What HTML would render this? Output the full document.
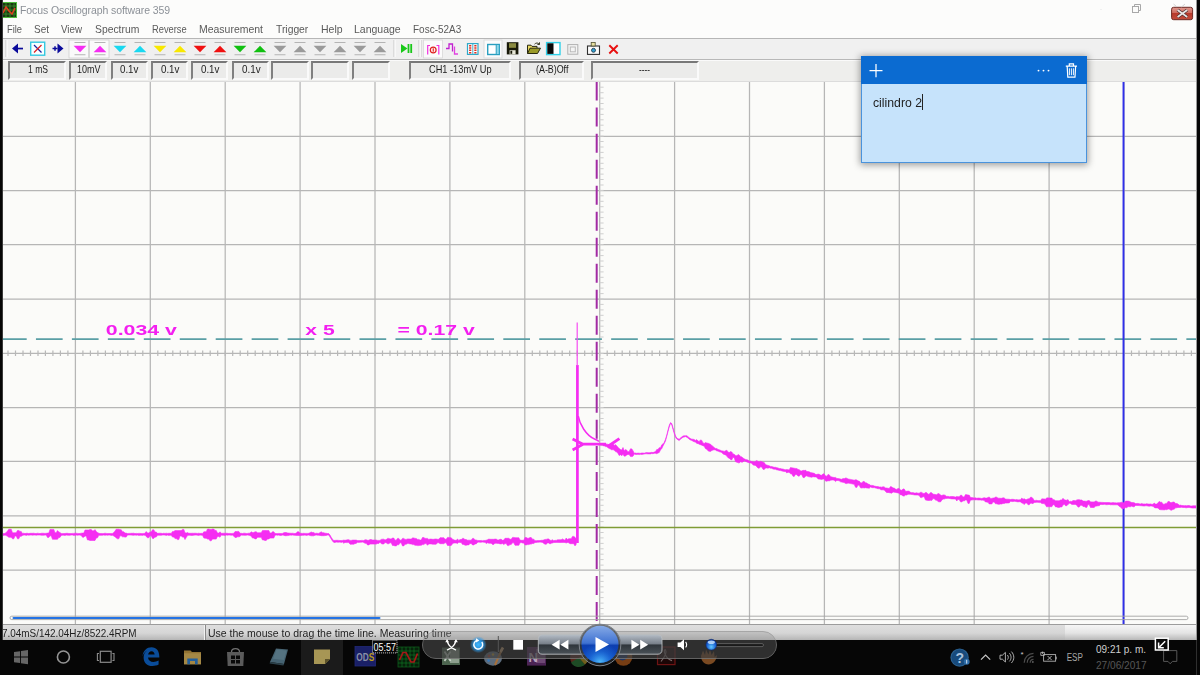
<!DOCTYPE html>
<html><head><meta charset="utf-8"><title>Focus Oscillograph software 359</title>
<style>
html,body{margin:0;padding:0;background:#fbfbf9;}
body{width:1200px;height:675px;overflow:hidden;position:relative;font-family:"Liberation Sans",sans-serif;}
#root{position:absolute;left:0;top:0;width:1200px;height:675px;overflow:hidden;background:#fbfbf9;}
.abs{position:absolute;}
.fit{display:inline-block;transform-origin:0 50%;white-space:nowrap;}
#titlebar{left:0;top:0;width:1200px;height:20px;background:#fcfcfb;}
#title{left:20px;top:3.5px;font-size:11.5px;color:#8b9097;white-space:nowrap;letter-spacing:-0.1px;}
#menubar{left:0;top:20px;width:1200px;height:18px;background:#fcfcfb;}
.mi{position:absolute;top:22.5px;font-size:11.5px;color:#5a5a5a;white-space:nowrap;}
#toolbar{left:0;top:38px;width:1200px;height:21px;background:#f0f0f0;border-top:1px solid #b6b6b6;box-sizing:border-box;}
#infobar{left:0;top:59px;width:1200px;height:23px;background:#eeeeec;border-top:1px solid #b8b8b8;box-shadow:inset 0 1px 0 #fafafa, inset 0 -1px 0 #dcdcdc;box-sizing:border-box;}
.ib{position:absolute;top:61px;height:19px;box-sizing:border-box;border-top:2px solid #787878;border-left:2px solid #808080;border-right:2px solid #fafafa;border-bottom:2px solid #fafafa;background:#ebebea;font-size:10.5px;color:#222;text-align:center;line-height:14px;white-space:nowrap;}
#leftedge{left:0;top:0;width:3px;height:640px;background:linear-gradient(90deg,#060606 0,#060606 2px,#3a3a3a 2px,#3a3a3a 3px);}
#rightedge{left:1196px;top:0;width:4px;height:640px;background:linear-gradient(90deg,#9a9a9a 0,#9a9a9a 1px,#060606 1px,#060606 4px);}
#plot{left:0;top:82px;width:1200px;height:543px;filter:blur(0.35px);}
#status{left:0;top:624px;width:1200px;height:16px;background:linear-gradient(#9c9c9c 0,#9c9c9c 1px,#dedede 1px,#d6d6d6 9px,#b6b6b6 16px);}
.st{position:absolute;top:625.5px;font-size:11.5px;line-height:14px;color:#1e1e1e;white-space:nowrap;}
#taskbar{left:0;top:640px;width:1200px;height:35px;background:#060606;}
.it{position:absolute;top:63px;font-size:10.5px;line-height:13px;color:#1c1c1c;white-space:nowrap;}
.mag{font-family:"Liberation Sans",sans-serif;font-weight:bold;fill:#f31ff0;}
</style></head><body><div id="root">
<div id="titlebar" class="abs"></div>
<div id="title" class="abs"><span class="fit" style="transform:scaleX(0.9125)">Focus Oscillograph software 359</span></div>
<div id="menubar" class="abs"></div>
<div class="mi" style="left:6.7px"><span class="fit" style="transform:scaleX(0.8094)">File</span></div>
<div class="mi" style="left:34px"><span class="fit" style="transform:scaleX(0.8688)">Set</span></div>
<div class="mi" style="left:61px"><span class="fit" style="transform:scaleX(0.8496)">View</span></div>
<div class="mi" style="left:95px"><span class="fit" style="transform:scaleX(0.9001)">Spectrum</span></div>
<div class="mi" style="left:152.3px"><span class="fit" style="transform:scaleX(0.8102)">Reverse</span></div>
<div class="mi" style="left:199.3px"><span class="fit" style="transform:scaleX(0.9102)">Measurement</span></div>
<div class="mi" style="left:276px"><span class="fit" style="transform:scaleX(0.8972)">Trigger</span></div>
<div class="mi" style="left:320.7px"><span class="fit" style="transform:scaleX(0.9131)">Help</span></div>
<div class="mi" style="left:354.3px"><span class="fit" style="transform:scaleX(0.9126)">Language</span></div>
<div class="mi" style="left:412.7px"><span class="fit" style="transform:scaleX(0.8686)">Fosc-52A3</span></div>
<div id="toolbar" class="abs"></div>
<div id="infobar" class="abs"></div>
<svg class="abs" style="left:0;top:38px" width="700" height="21" viewBox="0 38 700 21">
<path d="M12,48.5 L18,43.5 V53.5 Z" fill="#0a0a9a"/><rect x="18" y="47.7" width="5" height="1.7" fill="#0a0a9a"/>
<rect x="30.7" y="42.2" width="14" height="13" fill="#f8ffff" stroke="#35c8e0" stroke-width="1.4"/>
<path d="M34,45 L41.5,52.5" stroke="#2020a0" stroke-width="1.3"/><path d="M41.5,45 L34,52.5" stroke="#e02020" stroke-width="1.3"/>
<path d="M63.5,48.5 L57.5,43.5 V53.5 Z" fill="#0a0a9a"/><path d="M52.5,48.5H57.5M55,46.3V50.8" stroke="#0a0a9a" stroke-width="1.5"/>
<rect x="69" y="40" width="19.5" height="18" fill="#fafafa" stroke="#d0d0d0" stroke-width="0.8"/>
<rect x="89.5" y="40" width="19.5" height="18" fill="#fafafa" stroke="#d0d0d0" stroke-width="0.8"/>
<path d="M73.6,45.7 H86.4 L80,52.3 Z" fill="#f52df2"/>
<path d="M74.5,42.5H85.5M74.5,54.8H85.5" stroke="#b4b4b4" stroke-width="1.1"/>
<path d="M93.6,52.3 H106.4 L100,45.7 Z" fill="#f52df2"/>
<path d="M94.5,42.5H105.5M94.5,54.8H105.5" stroke="#b4b4b4" stroke-width="1.1"/>
<path d="M113.6,45.7 H126.4 L120,52.3 Z" fill="#18d8f0"/>
<path d="M114.5,42.5H125.5M114.5,54.8H125.5" stroke="#b4b4b4" stroke-width="1.1"/>
<path d="M133.6,52.3 H146.4 L140,45.7 Z" fill="#18d8f0"/>
<path d="M134.5,42.5H145.5M134.5,54.8H145.5" stroke="#b4b4b4" stroke-width="1.1"/>
<path d="M153.6,45.7 H166.4 L160,52.3 Z" fill="#f8e800"/>
<path d="M154.5,42.5H165.5M154.5,54.8H165.5" stroke="#b4b4b4" stroke-width="1.1"/>
<path d="M173.6,52.3 H186.4 L180,45.7 Z" fill="#f8e800"/>
<path d="M174.5,42.5H185.5M174.5,54.8H185.5" stroke="#b4b4b4" stroke-width="1.1"/>
<path d="M193.6,45.7 H206.4 L200,52.3 Z" fill="#f01010"/>
<path d="M194.5,42.5H205.5M194.5,54.8H205.5" stroke="#b4b4b4" stroke-width="1.1"/>
<path d="M213.6,52.3 H226.4 L220,45.7 Z" fill="#f01010"/>
<path d="M214.5,42.5H225.5M214.5,54.8H225.5" stroke="#b4b4b4" stroke-width="1.1"/>
<path d="M233.6,45.7 H246.4 L240,52.3 Z" fill="#10c010"/>
<path d="M234.5,42.5H245.5M234.5,54.8H245.5" stroke="#b4b4b4" stroke-width="1.1"/>
<path d="M253.6,52.3 H266.4 L260,45.7 Z" fill="#10c010"/>
<path d="M254.5,42.5H265.5M254.5,54.8H265.5" stroke="#b4b4b4" stroke-width="1.1"/>
<path d="M273.6,45.7 H286.4 L280,52.3 Z" fill="#9a9a9a"/>
<path d="M274.5,42.5H285.5M274.5,54.8H285.5" stroke="#b4b4b4" stroke-width="1.1"/>
<path d="M293.6,52.3 H306.4 L300,45.7 Z" fill="#9a9a9a"/>
<path d="M294.5,42.5H305.5M294.5,54.8H305.5" stroke="#b4b4b4" stroke-width="1.1"/>
<path d="M313.6,45.7 H326.4 L320,52.3 Z" fill="#9a9a9a"/>
<path d="M314.5,42.5H325.5M314.5,54.8H325.5" stroke="#b4b4b4" stroke-width="1.1"/>
<path d="M333.6,52.3 H346.4 L340,45.7 Z" fill="#9a9a9a"/>
<path d="M334.5,42.5H345.5M334.5,54.8H345.5" stroke="#b4b4b4" stroke-width="1.1"/>
<path d="M353.6,45.7 H366.4 L360,52.3 Z" fill="#9a9a9a"/>
<path d="M354.5,42.5H365.5M354.5,54.8H365.5" stroke="#b4b4b4" stroke-width="1.1"/>
<path d="M373.6,52.3 H386.4 L380,45.7 Z" fill="#9a9a9a"/>
<path d="M374.5,42.5H385.5M374.5,54.8H385.5" stroke="#b4b4b4" stroke-width="1.1"/>
<path d="M6,40V57" stroke="#c8c8c8" stroke-width="1"/><path d="M7,40V57" stroke="#ffffff" stroke-width="1"/>
<path d="M394,40V57" stroke="#c8c8c8" stroke-width="1"/><path d="M395,40V57" stroke="#ffffff" stroke-width="1"/>
<path d="M419,40V57" stroke="#c8c8c8" stroke-width="1"/><path d="M420,40V57" stroke="#ffffff" stroke-width="1"/>
<path d="M422,40V57" stroke="#c8c8c8" stroke-width="1"/><path d="M423,40V57" stroke="#ffffff" stroke-width="1"/>
<path d="M401,44 L407.5,48.5 L401,53 Z" fill="#18c818"/><rect x="407.6" y="44" width="1.8" height="9" fill="#18c818"/><rect x="410.3" y="44" width="1.8" height="9" fill="#18c818"/>
<rect x="423.5" y="40" width="19" height="18" fill="#fbfbfb" stroke="#d8d8d8" stroke-width="0.8"/>
<path d="M430,45.5H427.7V54.5M436.5,45.5H438.8V54.5" stroke="#f030e0" stroke-width="1.2" fill="none"/>
<circle cx="433.2" cy="50" r="2.9" fill="#fff0f0" stroke="#e02020" stroke-width="1.2"/><rect x="432.7" y="48.3" width="1.1" height="3.4" fill="#e02020"/>
<path d="M446,48.5H449V44H452.5V51.5" stroke="#c020d0" stroke-width="1.3" fill="none"/><path d="M454.5,46.5V54H458" stroke="#e040e0" stroke-width="1.3" fill="none"/>
<rect x="467.5" y="43.6" width="10.5" height="10.8" fill="#fff" stroke="#30a8c8" stroke-width="1.2"/>
<path d="M472.8,43.6V54.4" stroke="#30a8c8" stroke-width="0.9"/><path d="M470.2,45V53.4M475.4,45V53.4" stroke="#e03020" stroke-width="2.2" stroke-dasharray="1.5,0.8"/>
<rect x="484" y="40" width="18" height="18" fill="#fbfbfb" stroke="#d8d8d8" stroke-width="0.8"/>
<rect x="487.7" y="44.5" width="11.6" height="10" fill="#ffffff" stroke="#2a9fc0" stroke-width="1.4"/><rect x="496.2" y="44.5" width="3.1" height="10" fill="#8fd8ea" stroke="#2a9fc0" stroke-width="1"/>
<rect x="506.8" y="42.2" width="11.6" height="12.2" fill="#181808"/><rect x="509" y="43.2" width="7" height="4.6" fill="#8a8a40"/><rect x="509.6" y="50.2" width="6" height="4.2" fill="#e8e8d8"/><rect x="510.4" y="50.8" width="1.8" height="3" fill="#181808"/>
<path d="M527.5,53.5V45.2H531L532,46.4H537V48" fill="#e8d860" stroke="#282810" stroke-width="1"/>
<path d="M527.5,53.5L530,48.2H540.5L537.5,53.5Z" fill="#9a9a28" stroke="#282810" stroke-width="1"/>
<path d="M534.5,44.2C536,42.6 538,42.6 539.3,44.2M539.5,42.3V44.5H537.4" stroke="#282810" stroke-width="0.9" fill="none"/>
<rect x="546.6" y="42.6" width="13.4" height="12" fill="#ffffff" stroke="#30d0e8" stroke-width="1.4"/><rect x="547.3" y="43.3" width="6.2" height="10.6" fill="#080808"/>
<rect x="567.8" y="44.6" width="10" height="9.6" fill="#f4f4f4" stroke="#b0b0b0" stroke-width="1"/><rect x="570.3" y="47" width="5" height="4.8" fill="none" stroke="#b8b8b8" stroke-width="1"/>
<rect x="587.5" y="46" width="12" height="8.4" fill="#fafafa" stroke="#303030" stroke-width="1.1"/><rect x="591.2" y="42.5" width="4" height="3.5" fill="#e8e0a0" stroke="#505030" stroke-width="0.8"/><circle cx="593.5" cy="50.3" r="2" fill="#30a0d0" stroke="#203040" stroke-width="0.8"/>
<path d="M609.3,45.3L617.7,53.5M617.7,45.3L609.3,53.5" stroke="#e81010" stroke-width="1.9" fill="none"/>
</svg>
<svg class="abs" style="left:2px;top:2px" width="15" height="16" viewBox="0 0 15 16"><rect width="15" height="16" fill="#101010"/><rect x="0.5" y="0.5" width="14" height="15" fill="#1a3a10" stroke="#50c040" stroke-width="1"/><path d="M0,4H15M0,8H15M0,12H15M4,0V16M8,0V16M12,0V16" stroke="#40a030" stroke-width="0.7"/><path d="M1,11 L4,5 L7,9 L10,12 L13,6" stroke="#e04020" stroke-width="1.6" fill="none"/></svg>
<svg class="abs" style="left:1100px;top:0" width="100" height="24" viewBox="1100 0 100 24"><defs><linearGradient id="cb" x1="0" y1="0" x2="0" y2="1"><stop offset="0" stop-color="#e09a90"/><stop offset="0.45" stop-color="#cf6a5e"/><stop offset="0.5" stop-color="#b83a2c"/><stop offset="1" stop-color="#c24c3c"/></linearGradient></defs><rect x="1132.5" y="6.5" width="6" height="6" fill="#fcfcfb" stroke="#a8a8a8" stroke-width="1"/><path d="M1134.5,6.5V4.5H1140.5V10.5H1138.5" fill="none" stroke="#a8a8a8" stroke-width="1"/><rect x="1171.6" y="7.3" width="21" height="12.4" rx="2" fill="url(#cb)" stroke="#6e2a24" stroke-width="1"/><path d="M1177.6,10L1187.2,17M1187.2,10L1177.6,17" stroke="#4a2a2a" stroke-width="3.2"/><path d="M1177.6,10L1187.2,17M1187.2,10L1177.6,17" stroke="#e8e4e4" stroke-width="1.8"/><path d="M1173.5,4L1177,7M1185,4L1181.5,7" stroke="#cfcfcf" stroke-width="0.9"/><path d="M1093,9.5H1102" stroke="#f0f0f0" stroke-width="1"/></svg>
<div class="ib" style="left:8px;width:58px"></div>
<div class="ib" style="left:69px;width:38px"></div>
<div class="ib" style="left:111px;width:37px"></div>
<div class="ib" style="left:151px;width:37px"></div>
<div class="ib" style="left:191px;width:37px"></div>
<div class="ib" style="left:232px;width:37px"></div>
<div class="ib" style="left:271px;width:38px"></div>
<div class="ib" style="left:311px;width:38px"></div>
<div class="ib" style="left:352px;width:38px"></div>
<div class="ib" style="left:409px;width:102px"></div>
<div class="ib" style="left:519px;width:65px"></div>
<div class="ib" style="left:591px;width:108px"></div>
<div class="it" style="left:28.3px"><span class="fit" style="transform:scaleX(0.8158)">1 mS</span></div>
<div class="it" style="left:77px"><span class="fit" style="transform:scaleX(0.8565)">10mV</span></div>
<div class="it" style="left:120.3px"><span class="fit" style="transform:scaleX(0.9265)">0.1v</span></div>
<div class="it" style="left:160.8px"><span class="fit" style="transform:scaleX(0.9265)">0.1v</span></div>
<div class="it" style="left:200.8px"><span class="fit" style="transform:scaleX(0.9265)">0.1v</span></div>
<div class="it" style="left:241.7px"><span class="fit" style="transform:scaleX(0.9366)">0.1v</span></div>
<div class="it" style="left:429.4px"><span class="fit" style="transform:scaleX(0.8792)">CH1 -13mV Up</span></div>
<div class="it" style="left:535.6px"><span class="fit" style="transform:scaleX(0.8457)">(A-B)Off</span></div>
<div class="it" style="left:639px"><span class="fit" style="transform:scaleX(0.7857)">----</span></div>

<svg id="plot" class="abs" width="1200" height="543" viewBox="0 82 1200 543">
<rect x="0" y="82" width="1200" height="543" fill="#fbfbf9"/>
<line x1="75.4" y1="82" x2="75.4" y2="625" stroke="#b6b6b6" stroke-width="1.25"/>
<line x1="150.3" y1="82" x2="150.3" y2="625" stroke="#b6b6b6" stroke-width="1.25"/>
<line x1="225.2" y1="82" x2="225.2" y2="625" stroke="#b6b6b6" stroke-width="1.25"/>
<line x1="300.1" y1="82" x2="300.1" y2="625" stroke="#b6b6b6" stroke-width="1.25"/>
<line x1="375.0" y1="82" x2="375.0" y2="625" stroke="#b6b6b6" stroke-width="1.25"/>
<line x1="449.9" y1="82" x2="449.9" y2="625" stroke="#b6b6b6" stroke-width="1.25"/>
<line x1="524.8" y1="82" x2="524.8" y2="625" stroke="#b6b6b6" stroke-width="1.25"/>
<line x1="599.7" y1="82" x2="599.7" y2="625" stroke="#b6b6b6" stroke-width="1.25"/>
<line x1="674.6" y1="82" x2="674.6" y2="625" stroke="#b6b6b6" stroke-width="1.25"/>
<line x1="749.5" y1="82" x2="749.5" y2="625" stroke="#b6b6b6" stroke-width="1.25"/>
<line x1="824.4" y1="82" x2="824.4" y2="625" stroke="#b6b6b6" stroke-width="1.25"/>
<line x1="899.3" y1="82" x2="899.3" y2="625" stroke="#b6b6b6" stroke-width="1.25"/>
<line x1="974.2" y1="82" x2="974.2" y2="625" stroke="#b6b6b6" stroke-width="1.25"/>
<line x1="1049.1" y1="82" x2="1049.1" y2="625" stroke="#b6b6b6" stroke-width="1.25"/>
<line x1="1124.0" y1="82" x2="1124.0" y2="625" stroke="#b6b6b6" stroke-width="1.25"/>
<line x1="2" y1="136.3" x2="1200" y2="136.3" stroke="#b6b6b6" stroke-width="1.25"/>
<line x1="2" y1="190.5" x2="1200" y2="190.5" stroke="#b6b6b6" stroke-width="1.25"/>
<line x1="2" y1="244.5" x2="1200" y2="244.5" stroke="#b6b6b6" stroke-width="1.25"/>
<line x1="2" y1="299.0" x2="1200" y2="299.0" stroke="#b6b6b6" stroke-width="1.25"/>
<line x1="2" y1="353.3" x2="1200" y2="353.3" stroke="#b6b6b6" stroke-width="1.25"/>
<line x1="2" y1="407.5" x2="1200" y2="407.5" stroke="#b6b6b6" stroke-width="1.25"/>
<line x1="2" y1="461.3" x2="1200" y2="461.3" stroke="#b6b6b6" stroke-width="1.25"/>
<line x1="2" y1="515.9" x2="1200" y2="515.9" stroke="#b6b6b6" stroke-width="1.25"/>
<line x1="2" y1="570.2" x2="1200" y2="570.2" stroke="#b6b6b6" stroke-width="1.25"/>
<line x1="2.5" y1="82" x2="2.5" y2="625" stroke="#999" stroke-width="1"/>
<line x1="1197.5" y1="82" x2="1197.5" y2="625" stroke="#c4c4c4" stroke-width="1"/>
<path d="M0.5,350.6V356.1M8.0,350.6V356.1M15.5,350.6V356.1M23.0,350.6V356.1M30.5,350.6V356.1M38.0,350.6V356.1M45.4,350.6V356.1M52.9,350.6V356.1M60.4,350.6V356.1M67.9,350.6V356.1M75.4,350.6V356.1M82.9,350.6V356.1M90.4,350.6V356.1M97.9,350.6V356.1M105.4,350.6V356.1M112.9,350.6V356.1M120.3,350.6V356.1M127.8,350.6V356.1M135.3,350.6V356.1M142.8,350.6V356.1M150.3,350.6V356.1M157.8,350.6V356.1M165.3,350.6V356.1M172.8,350.6V356.1M180.3,350.6V356.1M187.8,350.6V356.1M195.2,350.6V356.1M202.7,350.6V356.1M210.2,350.6V356.1M217.7,350.6V356.1M225.2,350.6V356.1M232.7,350.6V356.1M240.2,350.6V356.1M247.7,350.6V356.1M255.2,350.6V356.1M262.7,350.6V356.1M270.1,350.6V356.1M277.6,350.6V356.1M285.1,350.6V356.1M292.6,350.6V356.1M300.1,350.6V356.1M307.6,350.6V356.1M315.1,350.6V356.1M322.6,350.6V356.1M330.1,350.6V356.1M337.6,350.6V356.1M345.0,350.6V356.1M352.5,350.6V356.1M360.0,350.6V356.1M367.5,350.6V356.1M375.0,350.6V356.1M382.5,350.6V356.1M390.0,350.6V356.1M397.5,350.6V356.1M405.0,350.6V356.1M412.4,350.6V356.1M419.9,350.6V356.1M427.4,350.6V356.1M434.9,350.6V356.1M442.4,350.6V356.1M449.9,350.6V356.1M457.4,350.6V356.1M464.9,350.6V356.1M472.4,350.6V356.1M479.9,350.6V356.1M487.4,350.6V356.1M494.8,350.6V356.1M502.3,350.6V356.1M509.8,350.6V356.1M517.3,350.6V356.1M524.8,350.6V356.1M532.3,350.6V356.1M539.8,350.6V356.1M547.3,350.6V356.1M554.8,350.6V356.1M562.2,350.6V356.1M569.7,350.6V356.1M577.2,350.6V356.1M584.7,350.6V356.1M592.2,350.6V356.1M599.7,350.6V356.1M607.2,350.6V356.1M614.7,350.6V356.1M622.2,350.6V356.1M629.7,350.6V356.1M637.1,350.6V356.1M644.6,350.6V356.1M652.1,350.6V356.1M659.6,350.6V356.1M667.1,350.6V356.1M674.6,350.6V356.1M682.1,350.6V356.1M689.6,350.6V356.1M697.1,350.6V356.1M704.6,350.6V356.1M712.1,350.6V356.1M719.5,350.6V356.1M727.0,350.6V356.1M734.5,350.6V356.1M742.0,350.6V356.1M749.5,350.6V356.1M757.0,350.6V356.1M764.5,350.6V356.1M772.0,350.6V356.1M779.5,350.6V356.1M787.0,350.6V356.1M794.4,350.6V356.1M801.9,350.6V356.1M809.4,350.6V356.1M816.9,350.6V356.1M824.4,350.6V356.1M831.9,350.6V356.1M839.4,350.6V356.1M846.9,350.6V356.1M854.4,350.6V356.1M861.9,350.6V356.1M869.3,350.6V356.1M876.8,350.6V356.1M884.3,350.6V356.1M891.8,350.6V356.1M899.3,350.6V356.1M906.8,350.6V356.1M914.3,350.6V356.1M921.8,350.6V356.1M929.3,350.6V356.1M936.8,350.6V356.1M944.2,350.6V356.1M951.7,350.6V356.1M959.2,350.6V356.1M966.7,350.6V356.1M974.2,350.6V356.1M981.7,350.6V356.1M989.2,350.6V356.1M996.7,350.6V356.1M1004.2,350.6V356.1M1011.6,350.6V356.1M1019.1,350.6V356.1M1026.6,350.6V356.1M1034.1,350.6V356.1M1041.6,350.6V356.1M1049.1,350.6V356.1M1056.6,350.6V356.1M1064.1,350.6V356.1M1071.6,350.6V356.1M1079.1,350.6V356.1M1086.5,350.6V356.1M1094.0,350.6V356.1M1101.5,350.6V356.1M1109.0,350.6V356.1M1116.5,350.6V356.1M1124.0,350.6V356.1M1131.5,350.6V356.1M1139.0,350.6V356.1M1146.5,350.6V356.1M1154.0,350.6V356.1M1161.5,350.6V356.1M1168.9,350.6V356.1M1176.4,350.6V356.1M1183.9,350.6V356.1M1191.4,350.6V356.1" stroke="#b8b8b8" stroke-width="1.2" fill="none"/>
<path d="M599.6,87.2H603.6M599.6,92.7H603.6M599.6,98.1H603.6M599.6,103.5H603.6M599.6,109.0H603.6M599.6,114.4H603.6M599.6,119.8H603.6M599.6,125.2H603.6M599.6,130.7H603.6M599.6,136.1H603.6M599.6,141.5H603.6M599.6,147.0H603.6M599.6,152.4H603.6M599.6,157.8H603.6M599.6,163.3H603.6M599.6,168.7H603.6M599.6,174.1H603.6M599.6,179.5H603.6M599.6,185.0H603.6M599.6,190.4H603.6M599.6,195.8H603.6M599.6,201.3H603.6M599.6,206.7H603.6M599.6,212.1H603.6M599.6,217.6H603.6M599.6,223.0H603.6M599.6,228.4H603.6M599.6,233.8H603.6M599.6,239.3H603.6M599.6,244.7H603.6M599.6,250.1H603.6M599.6,255.6H603.6M599.6,261.0H603.6M599.6,266.4H603.6M599.6,271.9H603.6M599.6,277.3H603.6M599.6,282.7H603.6M599.6,288.1H603.6M599.6,293.6H603.6M599.6,299.0H603.6M599.6,304.4H603.6M599.6,309.9H603.6M599.6,315.3H603.6M599.6,320.7H603.6M599.6,326.2H603.6M599.6,331.6H603.6M599.6,337.0H603.6M599.6,342.4H603.6M599.6,347.9H603.6M599.6,353.3H603.6M599.6,358.7H603.6M599.6,364.2H603.6M599.6,369.6H603.6M599.6,375.0H603.6M599.6,380.4H603.6M599.6,385.9H603.6M599.6,391.3H603.6M599.6,396.7H603.6M599.6,402.2H603.6M599.6,407.6H603.6M599.6,413.0H603.6M599.6,418.5H603.6M599.6,423.9H603.6M599.6,429.3H603.6M599.6,434.8H603.6M599.6,440.2H603.6M599.6,445.6H603.6M599.6,451.0H603.6M599.6,456.5H603.6M599.6,461.9H603.6M599.6,467.3H603.6M599.6,472.8H603.6M599.6,478.2H603.6M599.6,483.6H603.6M599.6,489.1H603.6M599.6,494.5H603.6M599.6,499.9H603.6M599.6,505.3H603.6M599.6,510.8H603.6M599.6,516.2H603.6M599.6,521.6H603.6M599.6,527.1H603.6M599.6,532.5H603.6M599.6,537.9H603.6M599.6,543.4H603.6M599.6,548.8H603.6M599.6,554.2H603.6M599.6,559.6H603.6M599.6,565.1H603.6M599.6,570.5H603.6M599.6,575.9H603.6M599.6,581.4H603.6M599.6,586.8H603.6M599.6,592.2H603.6M599.6,597.6H603.6M599.6,603.1H603.6M599.6,608.5H603.6M599.6,613.9H603.6M599.6,619.4H603.6M599.6,624.8H603.6" stroke="#cfcfcf" stroke-width="1" fill="none"/>
<line x1="2" y1="527.5" x2="1200" y2="527.5" stroke="#7f9c36" stroke-width="1.3"/>
<line x1="0" y1="339.2" x2="1200" y2="339.2" stroke="#5a9fa5" stroke-width="1.7" stroke-dasharray="26.7,9.25"/>
<line x1="596.7" y1="81.6" x2="596.7" y2="625" stroke="#a22aa4" stroke-width="2" stroke-dasharray="19,7.02"/>
<line x1="1123.5" y1="82" x2="1123.5" y2="625" stroke="#2e2eea" stroke-width="1.9"/>
<rect x="10" y="616.2" width="1178" height="3.4" rx="1.7" fill="none" stroke="#a4a4a4" stroke-width="0.9"/>
<rect x="12.5" y="616.9" width="368" height="2.2" rx="1.1" fill="#2473e4"/>
<path d="M2.5,533.2 3.8,533.6 5.0,533.4 6.2,532.5 7.5,531.1 8.8,529.2 10.0,529.2 11.2,529.2 12.5,532.8 13.8,532.8 15.0,532.8 16.2,532.8 17.5,530.5 18.8,530.5 20.0,531.4 21.2,531.4 22.5,533.5 23.8,533.2 25.0,533.6 26.2,533.3 27.5,533.3 28.8,533.6 30.0,533.3 31.2,533.3 32.5,533.3 33.8,533.2 35.0,533.5 36.2,533.5 37.5,533.2 38.8,533.4 40.0,533.6 41.2,533.3 42.5,533.2 43.8,533.3 45.0,533.4 46.2,533.3 47.5,533.1 48.8,533.1 50.0,529.4 51.2,529.4 52.5,529.4 53.8,529.4 55.0,532.8 56.2,532.8 57.5,530.6 58.8,531.9 60.0,532.6 61.2,533.5 62.5,533.6 63.8,533.5 65.0,533.5 66.2,533.3 67.5,533.3 68.8,533.5 70.0,533.6 71.2,533.6 72.5,533.4 73.8,533.4 75.0,533.2 76.2,533.2 77.5,533.4 78.8,533.5 80.0,533.5 81.2,533.2 82.5,533.1 83.8,533.1 85.0,530.0 86.2,530.0 87.5,530.0 88.8,530.0 90.0,529.6 91.2,529.6 92.5,530.8 93.8,530.8 95.0,529.6 96.2,531.4 97.5,532.6 98.8,533.2 100.0,533.6 101.2,533.5 102.5,533.6 103.8,533.5 105.0,533.2 106.2,533.4 107.5,533.5 108.8,533.5 110.0,533.6 111.2,533.6 112.5,533.4 113.8,532.5 115.0,531.1 116.2,529.2 117.5,529.2 118.8,529.2 120.0,529.7 121.2,529.7 122.5,531.8 123.8,531.8 125.0,533.1 126.2,533.1 127.5,533.6 128.8,533.4 130.0,533.4 131.2,533.3 132.5,533.3 133.8,533.2 135.0,533.6 136.2,533.4 137.5,533.5 138.8,533.4 140.0,533.4 141.2,533.6 142.5,533.6 143.8,533.4 145.0,533.3 146.2,531.5 147.5,532.9 148.8,532.9 150.0,532.0 151.2,532.0 152.5,529.8 153.8,529.8 155.0,532.1 156.2,532.1 157.5,533.3 158.8,533.3 160.0,533.2 161.2,533.3 162.5,533.6 163.8,533.2 165.0,533.5 166.2,533.2 167.5,533.4 168.8,533.3 170.0,533.3 171.2,533.4 172.5,531.5 173.8,531.5 175.0,530.6 176.2,530.6 177.5,530.6 178.8,530.6 180.0,530.6 181.2,530.6 182.5,529.4 183.8,529.4 185.0,532.8 186.2,533.1 187.5,532.6 188.8,533.3 190.0,533.3 191.2,533.3 192.5,533.2 193.8,533.3 195.0,533.2 196.2,533.3 197.5,533.4 198.8,533.2 200.0,533.5 201.2,533.3 202.5,533.6 203.8,531.8 205.0,531.8 206.2,531.8 207.5,529.0 208.8,529.0 210.0,529.5 211.2,529.5 212.5,529.0 213.8,529.0 215.0,530.4 216.2,530.4 217.5,533.1 218.8,533.1 220.0,531.8 221.2,533.3 222.5,533.3 223.8,533.2 225.0,533.3 226.2,533.2 227.5,533.3 228.8,533.5 230.0,533.4 231.2,533.6 232.5,533.4 233.8,533.3 235.0,531.6 236.2,531.6 237.5,531.4 238.8,531.4 240.0,533.3 241.2,533.3 242.5,533.5 243.8,533.2 245.0,533.2 246.2,533.5 247.5,533.4 248.8,533.2 250.0,533.2 251.2,531.8 252.5,532.5 253.8,532.5 255.0,531.8 256.2,531.8 257.5,532.8 258.8,532.8 260.0,532.8 261.2,532.8 262.5,530.5 263.8,530.5 265.0,530.5 266.2,530.5 267.5,530.5 268.8,530.5 270.0,533.1 271.2,533.1 272.5,531.8 273.8,531.8 275.0,533.4 276.2,533.6 277.5,533.6 278.8,533.4 280.0,533.5 281.2,533.5 282.5,533.4 283.8,532.7 285.0,532.5 286.2,532.5 287.5,532.9 288.8,533.1 290.0,533.2 291.2,533.3 292.5,533.2 293.8,533.4 295.0,533.6 296.2,533.1 297.5,531.8 298.8,531.8 300.0,533.2 301.2,533.3 302.5,533.4 303.8,533.3 305.0,533.4 306.2,533.4 307.5,533.4 308.8,533.3 310.0,532.7 311.2,532.0 312.5,532.5 313.8,532.5 315.0,533.5 316.2,533.2 317.5,533.3 318.8,533.4 320.0,532.6 321.2,531.8 322.5,532.7 323.8,532.7 325.0,533.2 326.2,533.3 327.5,533.5 328.8,533.6 330.0,535.1 331.2,537.3 332.5,539.2 333.8,540.5 335.0,540.4 336.2,540.3 337.5,540.3 338.8,540.4 340.0,540.5 341.2,540.5 342.5,540.4 343.8,540.1 345.0,540.3 346.2,540.1 347.5,539.7 348.8,539.7 350.0,540.4 351.2,540.4 352.5,540.1 353.8,540.1 355.0,540.1 356.2,540.1 357.5,540.5 358.8,540.6 360.0,540.6 361.2,540.4 362.5,540.4 363.8,540.5 365.0,539.8 366.2,539.8 367.5,540.3 368.8,540.3 370.0,539.6 371.2,539.6 372.5,540.0 373.8,540.0 375.0,540.0 376.2,540.0 377.5,540.4 378.8,540.4 380.0,540.4 381.2,539.4 382.5,539.2 383.8,539.2 385.0,540.0 386.2,539.6 387.5,538.4 388.8,538.4 390.0,538.9 391.2,538.9 392.5,538.1 393.8,538.1 395.0,540.2 396.2,540.2 397.5,538.4 398.8,538.4 400.0,540.2 401.2,540.2 402.5,538.4 403.8,538.4 405.0,539.4 406.2,539.4 407.5,538.9 408.8,538.9 410.0,539.1 411.2,539.1 412.5,537.9 413.8,537.9 415.0,538.4 416.2,538.4 417.5,539.4 418.8,539.4 420.0,540.1 421.2,540.1 422.5,537.5 423.8,537.5 425.0,538.4 426.2,538.4 427.5,538.4 428.8,539.4 430.0,539.1 431.2,539.1 432.5,539.3 433.8,539.3 435.0,539.0 436.2,539.0 437.5,539.3 438.8,539.3 440.0,537.7 441.2,537.7 442.5,537.7 443.8,537.7 445.0,539.3 446.2,539.3 447.5,537.4 448.8,537.4 450.0,537.7 451.2,537.7 452.5,539.3 453.8,539.8 455.0,540.3 456.2,540.3 457.5,539.0 458.8,540.4 460.0,539.6 461.2,539.6 462.5,538.4 463.8,538.4 465.0,539.6 466.2,539.6 467.5,540.2 468.8,540.2 470.0,540.2 471.2,540.2 472.5,538.4 473.8,538.4 475.0,540.0 476.2,540.0 477.5,540.4 478.8,540.5 480.0,540.6 481.2,540.4 482.5,540.7 483.8,540.4 485.0,540.5 486.2,540.2 487.5,539.8 488.8,539.1 490.0,539.3 491.2,539.3 492.5,539.3 493.8,539.3 495.0,539.1 496.2,539.1 497.5,539.9 498.8,539.9 500.0,539.3 501.2,539.3 502.5,540.3 503.8,540.1 505.0,538.3 506.2,538.3 507.5,538.3 508.8,538.3 510.0,539.3 511.2,539.3 512.5,537.4 513.8,537.4 515.0,537.7 516.2,537.7 517.5,537.7 518.8,537.7 520.0,540.1 521.2,540.3 522.5,540.3 523.8,540.3 525.0,537.5 526.2,537.5 527.5,538.2 528.8,538.2 530.0,537.5 531.2,537.5 532.5,539.2 533.8,539.2 535.0,540.7 536.2,540.7 537.5,540.5 538.8,540.6 540.0,540.6 541.2,540.3 542.5,540.3 543.8,539.9 545.0,539.4 546.2,539.4 547.5,538.9 548.8,538.9 550.0,540.3 551.2,540.4 552.5,539.7 553.8,540.7 555.0,540.3 556.2,540.4 557.5,539.8 558.8,539.8 560.0,539.8 561.2,539.8 562.5,538.9 563.8,539.7 565.0,540.3 566.2,538.0 567.5,539.5 568.8,538.7 570.0,538.7 571.2,538.7 572.5,536.4 573.8,536.4 575.0,537.3 576.2,538.8 576.2,544.2 575.0,545.9 573.8,543.7 572.5,543.7 571.2,543.7 570.0,543.7 568.8,542.8 567.5,542.5 566.2,543.0 565.0,542.5 563.8,542.4 562.5,542.5 561.2,542.5 560.0,542.5 558.8,542.5 557.5,542.5 556.2,542.4 555.0,542.5 553.8,542.5 552.5,543.0 551.2,543.2 550.0,544.0 548.8,543.0 547.5,543.0 546.2,544.2 545.0,544.2 543.8,543.4 542.5,542.4 541.2,542.2 540.0,542.1 538.8,542.2 537.5,542.3 536.2,542.5 535.0,542.4 533.8,543.5 532.5,543.5 531.2,544.1 530.0,544.1 528.8,544.6 527.5,544.6 526.2,544.9 525.0,544.9 523.8,543.0 522.5,543.0 521.2,542.5 520.0,542.8 518.8,545.3 517.5,545.3 516.2,545.3 515.0,545.3 513.8,542.8 512.5,542.8 511.2,544.6 510.0,544.6 508.8,545.6 507.5,545.6 506.2,543.6 505.0,543.6 503.8,544.6 502.5,543.6 501.2,543.9 500.0,543.9 498.8,543.4 497.5,543.4 496.2,543.2 495.0,543.2 493.8,544.4 492.5,544.4 491.2,543.2 490.0,543.2 488.8,543.2 487.5,542.8 486.2,543.6 485.0,542.3 483.8,542.2 482.5,542.1 481.2,542.2 480.0,542.3 478.8,542.1 477.5,542.5 476.2,543.9 475.0,543.9 473.8,544.9 472.5,544.9 471.2,543.4 470.0,543.4 468.8,544.9 467.5,544.9 466.2,545.2 465.0,545.2 463.8,544.4 462.5,544.4 461.2,542.5 460.0,542.5 458.8,542.2 457.5,543.6 456.2,543.0 455.0,543.0 453.8,543.0 452.5,543.7 451.2,545.5 450.0,545.5 448.8,545.5 447.5,545.5 446.2,542.8 445.0,542.8 443.8,543.7 442.5,543.7 441.2,543.7 440.0,543.7 438.8,542.8 437.5,542.8 436.2,544.2 435.0,544.2 433.8,544.2 432.5,544.2 431.2,543.9 430.0,543.9 428.8,543.9 427.5,545.3 426.2,543.6 425.0,543.6 423.8,544.6 422.5,544.6 421.2,545.3 420.0,545.3 418.8,545.6 417.5,545.6 416.2,545.3 415.0,545.3 413.8,544.6 412.5,544.6 411.2,543.9 410.0,543.9 408.8,543.6 407.5,543.6 406.2,544.2 405.0,544.2 403.8,545.9 402.5,545.9 401.2,542.8 400.0,542.8 398.8,544.8 397.5,544.8 396.2,545.9 395.0,545.9 393.8,545.5 392.5,545.5 391.2,542.8 390.0,542.8 388.8,543.7 387.5,543.7 386.2,542.8 385.0,542.5 383.8,544.0 382.5,544.0 381.2,543.6 380.0,542.2 378.8,543.5 377.5,543.5 376.2,544.1 375.0,544.1 373.8,544.1 372.5,544.1 371.2,544.1 370.0,544.1 368.8,544.9 367.5,544.9 366.2,543.3 365.0,543.3 363.8,542.5 362.5,542.1 361.2,542.2 360.0,542.2 358.8,542.5 357.5,542.2 356.2,543.5 355.0,543.5 353.8,544.2 352.5,544.2 351.2,544.2 350.0,544.2 348.8,542.6 347.5,542.6 346.2,542.6 345.0,542.4 343.8,543.3 342.5,542.1 341.2,542.4 340.0,542.1 338.8,542.2 337.5,542.2 336.2,542.1 335.0,542.4 333.8,542.4 332.5,541.1 331.2,538.9 330.0,537.1 328.8,535.1 327.5,535.1 326.2,535.4 325.0,535.6 323.8,535.7 322.5,535.7 321.2,535.7 320.0,535.4 318.8,535.2 317.5,535.2 316.2,535.0 315.0,535.2 313.8,535.8 312.5,535.8 311.2,535.8 310.0,535.5 308.8,535.0 307.5,535.2 306.2,535.4 305.0,535.0 303.8,535.3 302.5,535.3 301.2,535.4 300.0,535.5 298.8,535.5 297.5,535.5 296.2,535.4 295.0,535.3 293.8,535.2 292.5,535.0 291.2,535.2 290.0,535.0 288.8,535.4 287.5,535.6 286.2,535.7 285.0,535.7 283.8,535.3 282.5,535.1 281.2,535.4 280.0,535.4 278.8,535.1 277.5,535.3 276.2,535.0 275.0,535.2 273.8,538.1 272.5,538.1 271.2,538.1 270.0,538.1 268.8,538.9 267.5,538.9 266.2,540.5 265.0,540.5 263.8,540.0 262.5,540.0 261.2,537.3 260.0,537.3 258.8,537.3 257.5,537.3 256.2,538.9 255.0,538.9 253.8,538.1 252.5,538.1 251.2,536.3 250.0,535.4 248.8,535.2 247.5,535.0 246.2,535.2 245.0,535.3 243.8,535.2 242.5,535.2 241.2,535.0 240.0,536.5 238.8,536.8 237.5,536.8 236.2,537.5 235.0,537.5 233.8,536.3 232.5,535.0 231.2,535.3 230.0,535.1 228.8,535.0 227.5,535.2 226.2,535.0 225.0,535.4 223.8,535.3 222.5,535.3 221.2,535.1 220.0,537.3 218.8,536.4 217.5,536.4 216.2,539.1 215.0,539.1 213.8,539.1 212.5,539.1 211.2,540.8 210.0,540.8 208.8,539.1 207.5,539.1 206.2,538.2 205.0,538.2 203.8,537.9 202.5,535.3 201.2,535.2 200.0,535.0 198.8,535.4 197.5,535.3 196.2,535.1 195.0,535.1 193.8,535.2 192.5,535.4 191.2,535.4 190.0,535.2 188.8,535.2 187.5,535.6 186.2,537.6 185.0,539.6 183.8,537.1 182.5,537.1 181.2,535.9 180.0,535.9 178.8,539.6 177.5,539.6 176.2,538.6 175.0,538.6 173.8,537.1 172.5,537.1 171.2,535.2 170.0,535.2 168.8,535.4 167.5,535.1 166.2,535.4 165.0,535.1 163.8,535.0 162.5,535.1 161.2,535.3 160.0,535.2 158.8,535.2 157.5,535.3 156.2,537.1 155.0,537.1 153.8,538.4 152.5,538.4 151.2,535.7 150.0,535.7 148.8,537.7 147.5,537.7 146.2,536.5 145.0,535.3 143.8,535.1 142.5,535.4 141.2,535.2 140.0,535.3 138.8,535.4 137.5,535.1 136.2,535.3 135.0,535.0 133.8,535.3 132.5,535.2 131.2,535.1 130.0,535.0 128.8,535.0 127.5,535.1 126.2,537.1 125.0,537.1 123.8,536.8 122.5,536.8 121.2,535.8 120.0,535.8 118.8,538.8 117.5,538.8 116.2,537.9 115.0,536.7 113.8,536.0 112.5,535.3 111.2,535.4 110.0,535.1 108.8,535.1 107.5,535.3 106.2,535.1 105.0,535.3 103.8,535.0 102.5,535.3 101.2,535.3 100.0,535.3 98.8,535.2 97.5,537.8 96.2,538.1 95.0,540.5 93.8,540.5 92.5,540.5 91.2,540.5 90.0,540.5 88.8,540.0 87.5,540.0 86.2,536.0 85.0,536.0 83.8,537.2 82.5,537.2 81.2,535.4 80.0,535.1 78.8,535.1 77.5,535.3 76.2,535.1 75.0,535.3 73.8,535.4 72.5,535.0 71.2,535.0 70.0,535.2 68.8,535.3 67.5,535.2 66.2,535.1 65.0,535.4 63.8,535.2 62.5,535.2 61.2,535.4 60.0,537.4 58.8,537.4 57.5,539.3 56.2,539.3 55.0,539.3 53.8,539.3 52.5,539.3 51.2,535.8 50.0,535.8 48.8,537.4 47.5,537.4 46.2,535.0 45.0,535.1 43.8,535.2 42.5,535.3 41.2,535.2 40.0,535.0 38.8,535.0 37.5,535.1 36.2,535.2 35.0,535.0 33.8,535.1 32.5,535.2 31.2,535.0 30.0,535.1 28.8,535.2 27.5,535.0 26.2,535.4 25.0,535.0 23.8,535.1 22.5,535.4 21.2,536.3 20.0,536.3 18.8,538.8 17.5,538.8 16.2,535.9 15.0,535.9 13.8,538.8 12.5,538.8 11.2,537.2 10.0,537.2 8.8,537.2 7.5,536.3 6.2,535.6 5.0,535.0 3.8,535.4 2.5,535.3Z" fill="#f52df2" stroke="#f52df2" stroke-width="0.6" stroke-linejoin="round"/>
<path d="M603.0,443.7 604.2,443.9 605.5,444.4 606.8,443.9 608.0,444.4 609.2,444.8 610.5,445.7 611.8,444.6 613.0,443.5 614.2,445.4 615.5,444.6 616.8,446.0 618.0,447.2 619.2,448.6 620.5,449.6 621.8,450.0 623.0,447.5 624.2,450.7 625.5,449.6 626.8,450.2 628.0,451.9 629.2,451.4 630.5,448.8 631.8,448.9 633.0,450.7 634.2,453.2 635.5,453.0 636.8,453.3 638.0,453.1 639.2,453.2 640.5,453.3 641.8,453.0 643.0,453.0 644.2,453.2 645.5,452.7 646.8,452.5 648.0,452.7 649.2,452.7 650.5,452.6 651.8,452.3 653.0,452.6 654.2,452.1 655.5,451.6 656.8,449.4 658.0,449.5 659.2,447.7 660.5,447.7 661.8,444.8 663.0,443.9 664.2,442.4 665.5,439.3 666.8,435.0 668.0,430.1 669.2,425.6 670.5,422.6 671.8,423.6 673.0,427.7 674.2,432.1 675.5,435.9 676.8,438.0 678.0,438.8 679.2,439.2 680.5,437.9 681.8,436.9 683.0,436.0 684.2,435.8 685.5,435.7 686.8,435.7 688.0,436.7 689.2,437.7 690.5,438.6 691.8,439.2 693.0,439.2 694.2,439.5 695.5,440.4 696.8,439.6 698.0,441.1 699.2,441.4 700.5,439.9 701.8,440.4 703.0,442.9 704.2,443.4 705.5,442.6 706.8,443.1 708.0,443.2 709.2,443.7 710.5,444.2 711.8,445.6 713.0,446.4 714.2,447.5 715.5,448.4 716.8,448.6 718.0,449.4 719.2,449.8 720.5,450.3 721.8,450.9 723.0,450.9 724.2,451.4 725.5,450.8 726.8,450.2 728.0,452.1 729.2,452.5 730.5,451.6 731.8,452.0 733.0,453.9 734.2,454.3 735.5,455.4 736.8,455.8 738.0,454.6 739.2,455.0 740.5,456.4 741.8,456.9 743.0,458.0 744.2,458.8 745.5,459.4 746.8,459.7 748.0,460.1 749.2,461.0 750.5,461.0 751.8,461.6 753.0,461.6 754.2,461.9 755.5,461.3 756.8,460.6 758.0,461.4 759.2,461.7 760.5,461.3 761.8,461.6 763.0,462.2 764.2,462.5 765.5,464.6 766.8,465.1 768.0,465.4 769.2,465.8 770.5,466.4 771.8,466.5 773.0,466.9 774.2,467.3 775.5,467.3 776.8,467.7 778.0,467.9 779.2,468.6 780.5,468.5 781.8,469.0 783.0,469.0 784.2,469.5 785.5,469.7 786.8,469.5 788.0,469.7 789.2,469.9 790.5,467.5 791.8,467.8 793.0,468.0 794.2,468.2 795.5,468.4 796.8,468.6 798.0,469.4 799.2,469.7 800.5,470.8 801.8,471.0 803.0,470.3 804.2,470.5 805.5,470.1 806.8,471.6 808.0,471.6 809.2,471.8 810.5,472.6 811.8,472.8 813.0,473.1 814.2,473.3 815.5,474.3 816.8,474.5 818.0,474.1 819.2,474.3 820.5,475.1 821.8,475.3 823.0,473.8 824.2,474.0 825.5,476.0 826.8,476.2 828.0,474.5 829.2,474.8 830.5,476.4 831.8,477.0 833.0,477.3 834.2,477.5 835.5,477.4 836.8,478.4 838.0,478.6 839.2,478.7 840.5,479.0 841.8,479.3 843.0,478.5 844.2,478.7 845.5,478.0 846.8,478.2 848.0,479.0 849.2,479.2 850.5,479.4 851.8,479.7 853.0,479.9 854.2,480.2 855.5,479.7 856.8,479.9 858.0,480.9 859.2,481.1 860.5,482.8 861.8,483.0 863.0,481.4 864.2,481.6 865.5,482.8 866.8,483.0 868.0,484.1 869.2,484.3 870.5,485.3 871.8,485.4 873.0,485.5 874.2,486.0 875.5,486.3 876.8,486.6 878.0,486.6 879.2,487.0 880.5,486.9 881.8,487.2 883.0,486.7 884.2,486.9 885.5,487.9 886.8,488.0 888.0,488.3 889.2,488.5 890.5,486.6 891.8,486.9 893.0,487.9 894.2,488.1 895.5,489.1 896.8,489.4 898.0,488.4 899.2,488.6 900.5,490.1 901.8,490.3 903.0,488.9 904.2,489.0 905.5,491.2 906.8,491.3 908.0,491.1 909.2,491.2 910.5,492.3 911.8,492.7 913.0,492.6 914.2,493.0 915.5,493.0 916.8,492.8 918.0,493.2 919.2,493.2 920.5,492.3 921.8,492.4 923.0,493.4 924.2,493.5 925.5,492.5 926.8,492.7 928.0,494.2 929.2,494.3 930.5,492.6 931.8,492.8 933.0,494.2 934.2,494.3 935.5,494.5 936.8,494.7 938.0,493.6 939.2,493.7 940.5,495.1 941.8,495.6 943.0,494.9 944.2,494.9 945.5,495.4 946.8,496.6 948.0,496.2 949.2,496.8 950.5,496.5 951.8,496.5 953.0,496.6 954.2,496.7 955.5,497.1 956.8,496.4 958.0,496.8 959.2,496.7 960.5,495.2 961.8,495.3 963.0,496.9 964.2,497.0 965.5,494.6 966.8,494.7 968.0,495.1 969.2,495.1 970.5,497.5 971.8,497.6 973.0,497.7 974.2,498.1 975.5,497.8 976.8,498.3 978.0,498.0 979.2,498.1 980.5,498.2 981.8,498.5 983.0,498.1 984.2,497.7 985.5,498.0 986.8,498.1 988.0,497.6 989.2,496.9 990.5,498.4 991.8,498.4 993.0,498.0 994.2,498.0 995.5,497.1 996.8,497.2 998.0,498.2 999.2,498.2 1000.5,498.3 1001.8,498.3 1003.0,497.8 1004.2,497.9 1005.5,499.1 1006.8,499.2 1008.0,499.2 1009.2,499.3 1010.5,499.6 1011.8,499.3 1013.0,499.3 1014.2,499.5 1015.5,499.8 1016.8,499.5 1018.0,499.9 1019.2,499.8 1020.5,499.7 1021.8,498.1 1023.0,499.2 1024.2,498.7 1025.5,499.6 1026.8,499.6 1028.0,498.8 1029.2,498.9 1030.5,497.2 1031.8,497.3 1033.0,498.5 1034.2,500.5 1035.5,500.4 1036.8,500.3 1038.0,500.7 1039.2,500.5 1040.5,500.7 1041.8,498.8 1043.0,498.9 1044.2,498.9 1045.5,499.2 1046.8,497.8 1048.0,497.9 1049.2,497.9 1050.5,498.0 1051.8,498.0 1053.0,499.7 1054.2,499.8 1055.5,500.7 1056.8,500.7 1058.0,500.8 1059.2,500.8 1060.5,500.0 1061.8,500.0 1063.0,498.3 1064.2,499.7 1065.5,500.1 1066.8,500.2 1068.0,499.6 1069.2,501.8 1070.5,501.3 1071.8,501.5 1073.0,500.5 1074.2,500.5 1075.5,500.7 1076.8,499.9 1078.0,499.7 1079.2,499.7 1080.5,500.0 1081.8,500.0 1083.0,501.1 1084.2,501.1 1085.5,501.2 1086.8,501.2 1088.0,500.6 1089.2,500.6 1090.5,501.8 1091.8,501.9 1093.0,501.9 1094.2,501.9 1095.5,501.1 1096.8,501.2 1098.0,502.2 1099.2,502.2 1100.5,502.3 1101.8,502.4 1103.0,502.4 1104.2,502.6 1105.5,502.5 1106.8,502.6 1108.0,502.6 1109.2,502.6 1110.5,502.8 1111.8,502.8 1113.0,502.6 1114.2,502.8 1115.5,502.8 1116.8,502.9 1118.0,502.7 1119.2,502.8 1120.5,502.5 1121.8,502.2 1123.0,502.7 1124.2,502.8 1125.5,501.0 1126.8,501.1 1128.0,501.1 1129.2,501.2 1130.5,501.9 1131.8,502.6 1133.0,502.6 1134.2,502.7 1135.5,503.6 1136.8,503.5 1138.0,503.4 1139.2,503.8 1140.5,503.9 1141.8,503.5 1143.0,504.0 1144.2,503.9 1145.5,504.0 1146.8,503.7 1148.0,504.0 1149.2,504.1 1150.5,503.9 1151.8,504.3 1153.0,504.3 1154.2,503.0 1155.5,504.1 1156.8,504.1 1158.0,502.8 1159.2,501.4 1160.5,502.2 1161.8,502.2 1163.0,504.2 1164.2,504.2 1165.5,503.4 1166.8,503.4 1168.0,501.4 1169.2,501.5 1170.5,502.6 1171.8,502.6 1173.0,502.0 1174.2,502.0 1175.5,503.5 1176.8,503.5 1178.0,504.0 1179.2,505.2 1180.5,505.1 1181.8,505.5 1183.0,505.6 1184.2,505.7 1185.5,505.6 1186.8,505.8 1188.0,505.5 1189.2,505.5 1190.5,505.9 1191.8,506.0 1193.0,505.8 1194.2,505.8 1195.5,505.7 1196.8,505.9 1196.8,508.0 1195.5,508.1 1194.2,508.0 1193.0,508.1 1191.8,507.9 1190.5,507.7 1189.2,507.5 1188.0,507.4 1186.8,507.8 1185.5,507.7 1184.2,507.4 1183.0,507.6 1181.8,507.2 1180.5,507.4 1179.2,507.5 1178.0,507.4 1176.8,507.8 1175.5,507.8 1174.2,509.3 1173.0,509.3 1171.8,510.2 1170.5,510.1 1169.2,509.1 1168.0,509.1 1166.8,509.7 1165.5,509.6 1164.2,509.9 1163.0,509.8 1161.8,509.8 1160.5,509.7 1159.2,509.4 1158.0,508.0 1156.8,507.9 1155.5,507.9 1154.2,507.5 1153.0,506.3 1151.8,506.1 1150.5,506.1 1149.2,506.2 1148.0,506.1 1146.8,505.8 1145.5,505.8 1144.2,506.1 1143.0,505.9 1141.8,505.8 1140.5,505.7 1139.2,505.6 1138.0,505.5 1136.8,505.5 1135.5,505.4 1134.2,506.8 1133.0,506.8 1131.8,506.1 1130.5,506.7 1129.2,506.7 1128.0,506.6 1126.8,507.7 1125.5,507.6 1124.2,508.7 1123.0,508.7 1121.8,508.6 1120.5,506.9 1119.2,506.3 1118.0,504.9 1116.8,504.8 1115.5,504.8 1114.2,504.8 1113.0,504.8 1111.8,504.7 1110.5,504.8 1109.2,504.4 1108.0,504.6 1106.8,504.7 1105.5,504.6 1104.2,504.3 1103.0,504.6 1101.8,504.4 1100.5,504.4 1099.2,505.8 1098.0,505.7 1096.8,506.1 1095.5,506.1 1094.2,507.6 1093.0,507.5 1091.8,507.5 1090.5,507.5 1089.2,504.6 1088.0,504.6 1086.8,507.4 1085.5,507.3 1084.2,506.5 1083.0,506.5 1081.8,505.3 1080.5,505.3 1079.2,507.1 1078.0,507.1 1076.8,505.2 1075.5,504.5 1074.2,504.4 1073.0,504.4 1071.8,504.4 1070.5,503.4 1069.2,503.3 1068.0,504.4 1066.8,505.7 1065.5,505.7 1064.2,504.3 1063.0,505.0 1061.8,507.0 1060.5,507.0 1059.2,507.4 1058.0,507.4 1056.8,506.9 1055.5,506.9 1054.2,504.7 1053.0,504.7 1051.8,506.8 1050.5,506.7 1049.2,506.7 1048.0,506.6 1046.8,507.0 1045.5,505.1 1044.2,503.6 1043.0,503.6 1041.8,503.5 1040.5,502.6 1039.2,502.6 1038.0,502.3 1036.8,502.3 1035.5,502.4 1034.2,502.4 1033.0,503.7 1031.8,503.3 1030.5,503.2 1029.2,504.8 1028.0,504.7 1026.8,503.1 1025.5,503.0 1024.2,504.6 1023.0,503.3 1021.8,502.9 1020.5,501.9 1019.2,501.7 1018.0,501.9 1016.8,501.7 1015.5,501.4 1014.2,501.3 1013.0,501.6 1011.8,501.5 1010.5,501.2 1009.2,503.0 1008.0,502.9 1006.8,503.1 1005.5,503.0 1004.2,503.5 1003.0,503.4 1001.8,504.0 1000.5,504.0 999.2,504.3 998.0,504.2 996.8,503.8 995.5,503.8 994.2,502.1 993.0,502.0 991.8,504.0 990.5,503.9 989.2,503.9 988.0,502.3 986.8,502.1 985.5,502.0 984.2,500.6 983.0,500.1 981.8,500.2 980.5,500.0 979.2,500.0 978.0,500.0 976.8,499.8 975.5,499.9 974.2,499.7 973.0,499.8 971.8,500.1 970.5,500.0 969.2,503.4 968.0,503.4 966.8,500.1 965.5,500.0 964.2,500.9 963.0,500.8 961.8,501.9 960.5,501.8 959.2,499.6 958.0,499.3 956.8,501.0 955.5,498.9 954.2,499.0 953.0,498.9 951.8,498.9 950.5,498.7 949.2,498.4 948.0,498.3 946.8,498.4 945.5,498.6 944.2,499.1 943.0,499.0 941.8,500.2 940.5,501.9 939.2,501.8 938.0,501.6 936.8,500.3 935.5,500.1 934.2,498.8 933.0,498.6 931.8,500.4 930.5,500.3 929.2,500.5 928.0,500.4 926.8,500.2 925.5,500.1 924.2,496.8 923.0,496.7 921.8,497.6 920.5,497.5 919.2,495.4 918.0,495.0 916.8,495.0 915.5,495.0 914.2,494.9 913.0,494.6 911.8,494.5 910.5,494.3 909.2,494.3 908.0,494.2 906.8,495.1 905.5,495.0 904.2,496.1 903.0,496.0 901.8,495.0 900.5,494.9 899.2,493.2 898.0,492.9 896.8,492.7 895.5,492.4 894.2,492.2 893.0,491.9 891.8,493.2 890.5,492.9 889.2,492.7 888.0,492.4 886.8,492.7 885.5,491.4 884.2,490.1 883.0,489.8 881.8,489.9 880.5,489.6 879.2,488.6 878.0,488.8 876.8,488.3 875.5,488.1 874.2,487.6 873.0,487.7 871.8,487.6 870.5,487.0 869.2,488.3 868.0,488.1 866.8,488.0 865.5,487.7 864.2,488.0 863.0,487.7 861.8,488.1 860.5,487.8 859.2,485.3 858.0,485.0 856.8,487.4 855.5,487.2 854.2,484.3 853.0,484.1 851.8,483.8 850.5,483.6 849.2,483.3 848.0,483.1 846.8,483.6 845.5,483.4 844.2,482.6 843.0,482.3 841.8,482.1 840.5,481.8 839.2,480.8 838.0,480.5 836.8,480.4 835.5,481.6 834.2,480.2 833.0,479.9 831.8,480.1 830.5,480.3 829.2,480.9 828.0,480.7 826.8,481.3 825.5,481.1 824.2,479.1 823.0,478.9 821.8,479.5 820.5,479.3 819.2,479.1 818.0,478.9 816.8,477.2 815.5,476.9 814.2,476.9 813.0,476.7 811.8,477.3 810.5,477.1 809.2,476.8 808.0,476.6 806.8,475.8 805.5,476.2 804.2,477.7 803.0,477.5 801.8,474.7 800.5,474.5 799.2,476.2 798.0,476.0 796.8,474.7 795.5,474.5 794.2,476.4 793.0,476.2 791.8,473.9 790.5,473.7 789.2,472.4 788.0,472.2 786.8,473.0 785.5,471.5 784.2,471.5 783.0,471.2 781.8,470.9 780.5,470.6 779.2,470.4 778.0,470.0 776.8,469.9 775.5,469.2 774.2,469.2 773.0,469.0 771.8,468.3 770.5,468.2 769.2,467.7 768.0,468.2 766.8,467.9 765.5,468.1 764.2,469.6 763.0,469.3 761.8,467.1 760.5,466.8 759.2,468.3 758.0,468.0 756.8,466.8 755.5,465.5 754.2,465.2 753.0,464.9 751.8,463.3 750.5,463.0 749.2,462.8 748.0,462.4 746.8,461.9 745.5,461.5 744.2,460.8 743.0,462.0 741.8,462.2 740.5,461.7 739.2,463.1 738.0,462.6 736.8,462.2 735.5,461.7 734.2,457.8 733.0,457.3 731.8,459.9 730.5,459.5 729.2,458.2 728.0,457.7 726.8,456.1 725.5,454.9 724.2,454.4 723.0,453.9 721.8,452.5 720.5,452.1 719.2,451.7 718.0,451.1 716.8,450.9 715.5,450.0 714.2,449.8 713.0,450.0 711.8,450.5 710.5,451.4 709.2,451.3 708.0,450.8 706.8,449.2 705.5,448.7 704.2,446.2 703.0,445.7 701.8,445.2 700.5,444.7 699.2,444.2 698.0,443.5 696.8,443.5 695.5,442.0 694.2,441.8 693.0,441.2 691.8,440.4 690.5,440.0 689.2,439.2 688.0,438.0 686.8,437.3 685.5,436.6 684.2,437.0 683.0,437.2 681.8,438.2 680.5,439.1 679.2,440.6 678.0,439.8 676.8,439.1 675.5,437.2 674.2,433.2 673.0,429.3 671.8,424.8 670.5,423.5 669.2,427.0 668.0,431.5 666.8,436.1 665.5,440.9 664.2,443.7 663.0,445.9 661.8,448.5 660.5,449.9 659.2,452.6 658.0,452.9 656.8,453.7 655.5,453.3 654.2,453.3 653.0,453.7 651.8,453.5 650.5,453.9 649.2,453.9 648.0,453.9 646.8,453.8 645.5,453.8 644.2,454.0 643.0,454.2 641.8,454.4 640.5,454.3 639.2,454.6 638.0,454.3 636.8,454.5 635.5,454.4 634.2,454.1 633.0,456.2 631.8,456.6 630.5,456.5 629.2,454.5 628.0,454.4 626.8,454.9 625.5,456.0 624.2,456.2 623.0,454.3 621.8,455.7 620.5,454.7 619.2,455.6 618.0,453.4 616.8,452.0 615.5,451.6 614.2,450.3 613.0,449.6 611.8,449.9 610.5,449.1 609.2,448.5 608.0,447.7 606.8,446.7 605.5,446.6 604.2,445.8 603.0,445.7Z" fill="#f52df2" stroke="#f52df2" stroke-width="0.6" stroke-linejoin="round"/>
<path d="M577.4,543V365" stroke="#f52df2" stroke-width="2.7" fill="none"/>
<path d="M577.2,366V322.5" stroke="#f64cf3" stroke-width="1.2" fill="none"/>
<path d="M578.3,416 C579.5,424 586,435.5 595,439.3 C597,440 598,440.6 599,441.5" stroke="#f52df2" stroke-width="1.5" fill="none"/>
<path d="M572.6,439 L583,444.3 L572.6,450 M583,444.2 H606" stroke="#f52df2" stroke-width="2.8" fill="none" stroke-linejoin="round"/>
<path d="M619.4,438.6 L608.5,446" stroke="#f52df2" stroke-width="2.9" fill="none"/>
<text x="105.8" y="335" class="mag" font-size="13.8" textLength="71.2" lengthAdjust="spacingAndGlyphs">0.034 v</text>
<text x="305.3" y="335" class="mag" font-size="13.8" textLength="29.4" lengthAdjust="spacingAndGlyphs">x 5</text>
<text x="397.5" y="335" class="mag" font-size="13.8" textLength="77.2" lengthAdjust="spacingAndGlyphs">= 0.17 v</text>
</svg>

<div class="abs" style="left:861px;top:56px;width:226px;height:107px;box-sizing:border-box;background:#c6e3fb;border:1px solid #4a93dc;box-shadow:0 1px 7px 1px rgba(0,0,0,0.38);"></div>
<div class="abs" style="left:861px;top:56px;width:226px;height:27.5px;background:#0b6bd1;"></div>
<svg class="abs" style="left:862px;top:57px" width="224" height="27" viewBox="862 57 224 27">
<path d="M869.5,70.6H882.5M876,64V77.2" stroke="#ffffff" stroke-width="1.25" fill="none"/>
<circle cx="1038.5" cy="70.6" r="0.95" fill="#fff"/><circle cx="1043.5" cy="70.6" r="0.95" fill="#fff"/><circle cx="1048.5" cy="70.6" r="0.95" fill="#fff"/>
<path d="M1065.8,66.2H1077M1069.3,66V63.9H1073.5V66M1067.2,66.5L1067.8,77.2H1075L1075.6,66.5" stroke="#ffffff" stroke-width="1.2" fill="none"/>
<path d="M1069.4,68.3V75.2M1071.4,68.3V75.2M1073.4,68.3V75.2" stroke="#ffffff" stroke-width="0.95" fill="none"/>
</svg>
<div class="abs" style="left:872.5px;top:94.7px;font-size:13px;line-height:16px;color:#1e1e1e;white-space:nowrap;"><span class="fit" style="transform:scaleX(0.9417)">cilindro 2</span></div>
<div class="abs" style="left:922.3px;top:93.5px;width:1.2px;height:16px;background:#222;"></div>

<div id="status" class="abs"></div>
<div class="abs" style="left:204px;top:625px;width:1px;height:15px;background:#f2f2f2"></div><div class="abs" style="left:205px;top:625px;width:1px;height:15px;background:#8a8a8a"></div>
<div class="abs" style="left:1065px;top:625px;width:135px;height:15px;background:linear-gradient(#f6f6f6 0,#e4e4e4 8px,#b8b8b8 15px)"></div>
<div class="st" style="left:1.5px;"><span class="fit" style="transform:scaleX(0.8623)">7.04mS/142.04Hz/8522.4RPM</span></div>
<div class="st" style="left:208px;"><span class="fit" style="transform:scaleX(0.9135)">Use the mouse to drag the time line. Measuring time</span></div>
<div id="taskbar" class="abs"></div>
<svg class="abs" style="left:0;top:620px" width="1200" height="55" viewBox="0 620 1200 55">
<defs>
<linearGradient id="pv" x1="0" y1="0" x2="0" y2="1"><stop offset="0" stop-color="#86aae6"/><stop offset="0.47" stop-color="#3f72d2"/><stop offset="0.53" stop-color="#0d3fb0"/><stop offset="1" stop-color="#0b49c4"/></linearGradient>
<radialGradient id="pg" cx="50%" cy="100%" r="55%"><stop offset="0" stop-color="#58c8ff" stop-opacity="0.95"/><stop offset="0.6" stop-color="#2a8af0" stop-opacity="0.35"/><stop offset="1" stop-color="#2a8af0" stop-opacity="0"/></radialGradient>
<linearGradient id="bt" x1="0" y1="0" x2="0" y2="1"><stop offset="0" stop-color="#b4bcc6"/><stop offset="0.48" stop-color="#767e88"/><stop offset="0.52" stop-color="#2f353b"/><stop offset="1" stop-color="#4a5258"/></linearGradient>
<radialGradient id="kn" cx="50%" cy="70%" r="70%"><stop offset="0" stop-color="#60c8ff"/><stop offset="0.6" stop-color="#1a60d0"/><stop offset="1" stop-color="#0a3090"/></radialGradient>
<radialGradient id="rp" cx="50%" cy="50%" r="50%"><stop offset="0" stop-color="#40b8ff"/><stop offset="0.55" stop-color="#2a98e8" stop-opacity="0.9"/><stop offset="1" stop-color="#2a98e8" stop-opacity="0"/></radialGradient>
</defs>
<g opacity="0.82"><!-- windows logo -->
<path d="M14,652 L20,651.2 V656.6 H14 Z M20.9,651 L28,650 V656.6 H20.9 Z M14,657.5 H20 V663 L14,662.2 Z M20.9,657.5 H28 V664.2 L20.9,663.2 Z" fill="#7c7c7c"/>
<circle cx="63.4" cy="657" r="6" fill="none" stroke="#b4b4b4" stroke-width="1.6"/>
<rect x="100.3" y="651.3" width="10.8" height="11" fill="none" stroke="#a8a8a8" stroke-width="1.2"/>
<path d="M99,653.5H97.4V660.5H99M112.4,653.5H114V660.5H112.4" fill="none" stroke="#a8a8a8" stroke-width="1.1"/>
<!-- edge -->
<path d="M142.5,656.5 C143,650.5 147,647.2 151.5,647.2 C156.5,647.2 159.3,651 159.3,656.2 V657.6 H148 C148.3,660.6 150.6,662 153.3,662 C155.3,662 157,661.5 158.6,660.6 V664.6 C156.8,665.6 154.8,666 152.4,666 C147,666 143.6,662.6 143.6,657.4 C143.6,654.4 145,652 147.2,650.6 C144.9,651.8 143.3,653.9 142.5,656.5 Z M148.1,654.6 H154.6 C154.5,652.6 153.4,651.3 151.5,651.3 C149.7,651.3 148.5,652.6 148.1,654.6 Z" fill="#0b5cba"/>
<!-- folder -->
<path d="M184,650.5 H190.5 L192,652 H201 V664.2 H184 Z" fill="#b08a3c"/>
<rect x="184" y="653.3" width="17" height="11" fill="#c9a554"/>
<path d="M187.3,664.3 V658.6 H197.7 V664.3 H195 V661 H190 V664.3 Z" fill="#2b74bd"/>
<!-- store -->
<path d="M231.5,652 C231.5,647.5 239.5,647.5 239.5,652" fill="none" stroke="#8a8a8a" stroke-width="1.3"/>
<path d="M227,652 H244 L243.3,666 H227.7 Z" fill="#6e6e6e"/>
<path d="M231,655.4H235V659H231ZM236,655.4H240V659H236ZM231,660H235V663.6H231ZM236,660H240V663.6H236Z" fill="#0a0a0a"/>
<!-- notebook -->
<path d="M276,648.5 L288,649.5 L284,664 L270,662 Z" fill="#55788a"/><path d="M270,662 L284,664 L283.4,665.6 L269.6,663.4 Z" fill="#36505c"/>
<path d="M276.6,649.6 L286.6,650.4 L283.8,660 L273,658.8Z" fill="#7fa3b4" opacity="0.45"/>
</g><!-- sticky tile -->
<rect x="301" y="640" width="42" height="35" fill="#1b1b1b"/>
<path d="M314,649.5 H330 V659 L325,664 H314 Z" fill="#a79655"/><path d="M330,659 H325 V664 Z" fill="#5c522a"/>
<!-- ODS -->
<rect x="355" y="646.6" width="20.5" height="19.4" fill="#1a2066" stroke="#222a7c" stroke-width="0.8"/>
<text x="356.2" y="660.6" font-family="Liberation Sans, sans-serif" font-weight="bold" font-size="11.5" fill="#8a8fa8" textLength="18" lengthAdjust="spacingAndGlyphs">OD<tspan fill="#b89a20">S</tspan></text>
<!-- osc icon -->
<rect x="398" y="647" width="21" height="20" fill="#06200a" stroke="#0f5a1c" stroke-width="0.8"/>
<path d="M398,651H419M398,655H419M398,659H419M398,663H419M402,647V667M406,647V667M410,647V667M414,647V667" stroke="#0e7424" stroke-width="0.7"/>
<path d="M399.5,660 L403,652.5 L406,652.5 L411,662 L414,662 L417.5,653.5" stroke="#a81818" stroke-width="1.7" fill="none"/>
<!-- excel -->
<rect x="442" y="647.5" width="18" height="17.5" fill="#5f7d62" opacity="0.8"/><rect x="450" y="649.5" width="9" height="13.5" fill="#a9b9aa" opacity="0.7"/>
<path d="M444.5,651.5 L450.5,661 M450.5,651.5 L444.5,661" stroke="#dfe8df" stroke-width="1.8" opacity="0.8"/>
<!-- paint -->
<ellipse cx="493" cy="658.5" rx="9" ry="7.2" fill="#5d6c7c"/><circle cx="489" cy="656" r="1.4" fill="#b84a3a"/><circle cx="493" cy="654.5" r="1.3" fill="#c9a33a"/><circle cx="488.6" cy="660.6" r="1.3" fill="#3a78b8"/>
<path d="M502.5,648 L495,665" stroke="#a8703a" stroke-width="2"/><path d="M503,647.5 L500.5,652" stroke="#c8a070" stroke-width="2.6"/>
<!-- onenote -->
<rect x="527" y="647" width="19" height="18.6" fill="#4c2454"/><rect x="536" y="649" width="9" height="14" fill="#7d5a82" opacity="0.7"/>
<text x="528.6" y="662.2" font-family="Liberation Sans, sans-serif" font-weight="bold" font-size="13" fill="#b9a2bc">N</text>
<!-- chrome (mostly hidden) -->
<g opacity="0.6"><circle cx="579" cy="657.5" r="9" fill="#8a3a2a"/><path d="M579,657.5 L571,662.5 A9,9 0 0 0 585,664.5 Z" fill="#2f7a3a"/><path d="M579,657.5 L585,664.5 A9,9 0 0 0 587.5,653.5Z" fill="#b89a2a"/></g>
<!-- firefox -->
<g opacity="0.7"><circle cx="623.5" cy="657" r="8.8" fill="#a8561a"/><circle cx="622.5" cy="655.5" r="5" fill="#2a4a8a"/></g>
<!-- acrobat -->
<rect x="657.5" y="647" width="17.5" height="17.6" fill="#1c0606" stroke="#6e1414" stroke-width="1.2"/>
<path d="M661,661.5 C665,657 667,652 665.6,650 C664.5,648.8 663.6,651 665,654 C666.5,657.4 669.6,660 672,660.6" stroke="#7a6a6a" stroke-width="1.1" fill="none"/>
<!-- hand -->
<path d="M701,656 L703,650.5 L705,655 L706,649.4 L708.4,654.6 L710,649.4 L711.6,655 L714,651 L714.6,657 L717,655 C716.5,661 713,664.4 708.6,664.4 C704,664.4 701.2,661 701,656Z" fill="#7a4a22"/>
<!-- pill -->
<path d="M436,631.5 H763 A13.5,13.5 0 0 1 763,658.5 H436 A13.5,13.5 0 0 1 436,631.5 Z" fill="#8a8a8a" fill-opacity="0.30" stroke="#9a9a9a" stroke-opacity="0.75" stroke-width="1"/>
<path d="M423.4,640 H775.6 A13.5,13.5 0 0 1 763,658.5 H436 A13.5,13.5 0 0 1 423.4,640Z" fill="#303030" fill-opacity="0.6"/>
<!-- shuffle -->
<path d="M447,640.5 C449,648 453,648.5 456,650 M456,640.5 C454,648 450,648.5 447,650" stroke="#fff" stroke-width="1.4" fill="none"/>
<path d="M445.3,642.2 L447,639 L449,642.2Z M454,642.2 L456,639 L457.8,642.2Z" fill="#fff"/>
<!-- repeat -->
<circle cx="478.3" cy="644.7" r="8.5" fill="url(#rp)"/>
<path d="M481.8,642 A4.4,4.4 0 1 1 477,640.4" stroke="#fff" stroke-width="1.4" fill="none"/><path d="M476,638.2 L479.4,640.6 L476,642.6Z" fill="#fff"/>
<path d="M498.3,636V652" stroke="#555" stroke-width="1"/>
<rect x="513.3" y="640" width="9.7" height="9.7" fill="#ffffff"/>
<!-- rew/ff buttons -->
<path d="M542,634.7 H590 V654.2 H542 A4,4 0 0 1 538.3,650 V638.7 A4,4 0 0 1 542,634.7Z" fill="url(#bt)" stroke="#b8bcc0" stroke-width="0.9"/>
<path d="M610,634.7 H658 A4,4 0 0 1 662,638.7 V650 A4,4 0 0 1 658,654.2 H610Z" fill="url(#bt)" stroke="#b8bcc0" stroke-width="0.9"/>
<path d="M559.6,639.8 V649.6 L551.6,644.7Z M568.4,639.8 V649.6 L560.4,644.7Z" fill="#fff"/>
<path d="M631.4,639.8 V649.6 L639.4,644.7Z M640.2,639.8 V649.6 L648.2,644.7Z" fill="#fff"/>
<!-- play -->
<circle cx="600" cy="645" r="20.8" fill="#2a2e34" fill-opacity="0.62" stroke="#7e848c" stroke-width="1"/>
<circle cx="600" cy="644.3" r="18.5" fill="url(#pv)"/>
<circle cx="600" cy="644.3" r="18.5" fill="url(#pg)"/>
<path d="M595.5,637 V652 L609,644.5Z" fill="#fff"/>
<!-- volume -->
<path d="M677.6,642.4 H680.4 L684,639.2 V650.2 L680.4,647 H677.6Z" fill="#fff"/><path d="M685.6,642 C687,643.4 687,646 685.6,647.4" stroke="#fff" stroke-width="1.1" fill="none"/>
<rect x="713" y="643.6" width="50.5" height="3" rx="1.5" fill="#1a1a1a" stroke="#6a6a6a" stroke-width="0.8"/>
<circle cx="711.3" cy="644.7" r="5.4" fill="url(#kn)" stroke="#0a2a70" stroke-width="0.6"/>
<ellipse cx="711.3" cy="642.2" rx="3.6" ry="1.8" fill="#d0e8ff" opacity="0.8"/>
<!-- time overlay -->
<rect x="372.5" y="640.3" width="24.5" height="12.6" fill="#080808" stroke="#e8e8e8" stroke-width="0.9" stroke-dasharray="1,1"/>
<text x="373.6" y="650.6" font-family="Liberation Sans, sans-serif" font-size="10.5" fill="#ffffff" textLength="22.4" lengthAdjust="spacingAndGlyphs">05:57</text>
<!-- tray -->
<circle cx="959.6" cy="657.6" r="9.2" fill="#2a5f8e"/><circle cx="959.6" cy="657.6" r="8" fill="#174a7c"/>
<text x="955.4" y="662.6" font-family="Liberation Sans, sans-serif" font-weight="bold" font-size="14" fill="#a9c3dc">?</text>
<circle cx="966.7" cy="661.8" r="3" fill="#2b6aa6"/><rect x="966.2" y="659.8" width="1" height="3.8" fill="#cfe0f0"/>
<path d="M981,659.6 L985.6,655 L990.2,659.6" stroke="#c8c8c8" stroke-width="1.2" fill="none"/>
<path d="M1000,655.2 H1002.4 L1005.4,652.4 V662 L1002.4,659.2 H1000Z" fill="none" stroke="#c0c0c0" stroke-width="0.9"/>
<path d="M1007.4,655 C1008.6,656.2 1008.6,658.4 1007.4,659.6 M1009.4,653.2 C1011.6,655.6 1011.6,659 1009.4,661.4 M1011.4,651.6 C1014.6,655 1014.6,659.6 1011.4,663" stroke="#c0c0c0" stroke-width="0.9" fill="none"/>
<path d="M1024.2,662.7 A9.3,9.3 0 0 1 1033.5,653.4 M1027.2,662.7 A6.3,6.3 0 0 1 1033.5,656.4 M1030.2,662.7 A3.3,3.3 0 0 1 1033.5,659.4" stroke="#4c4c4c" stroke-width="1.2" fill="none"/><circle cx="1032.8" cy="662" r="1" fill="#5a5a5a"/>
<text x="1020.5" y="656.6" font-family="Liberation Sans, sans-serif" font-size="8" fill="#c8c8c8">*</text>
<rect x="1043.6" y="654.6" width="12" height="6.6" fill="none" stroke="#b0b0b0" stroke-width="0.9"/><path d="M1056.2,656.6V659.4" stroke="#b0b0b0" stroke-width="1"/>
<path d="M1047.6,656 L1051.6,660 M1051.6,656 L1047.6,660" stroke="#c0c0c0" stroke-width="0.9"/>
<path d="M1042.6,651.6V654 M1040.8,652.4H1044.4V655.4H1040.8Z" stroke="#c0c0c0" stroke-width="0.8" fill="none"/>
<text x="1066.7" y="660.8" font-family="Liberation Sans, sans-serif" font-size="10" fill="#a8a8a8" textLength="16.2" lengthAdjust="spacingAndGlyphs">ESP</text>
<text x="1096" y="653" font-family="Liberation Sans, sans-serif" font-size="10" fill="#cfcfcf" textLength="50" lengthAdjust="spacingAndGlyphs">09:21 p. m.</text>
<text x="1096" y="669" font-family="Liberation Sans, sans-serif" font-size="10" fill="#565656" textLength="50.6" lengthAdjust="spacingAndGlyphs">27/06/2017</text>
<!-- notification -->
<path d="M1163.6,650.6 H1176.8 V661.4 H1172.4 L1170.2,663.8 L1168,661.4 H1163.6Z" fill="none" stroke="#585858" stroke-width="1"/>
<rect x="1155.4" y="638.2" width="12.8" height="11.8" fill="#0a0a0a" stroke="#ffffff" stroke-width="1.5"/>
<path d="M1165.2,641.2 L1159.2,647.2 M1158.6,642.6 V647.8 H1163.8" stroke="#fff" stroke-width="1.5" fill="none"/>
<path d="M1196.5,640V675" stroke="#3a3a3a" stroke-width="0.8"/>
</svg>

<div id="leftedge" class="abs"></div>
<div id="rightedge" class="abs"></div>
</div></body></html>
